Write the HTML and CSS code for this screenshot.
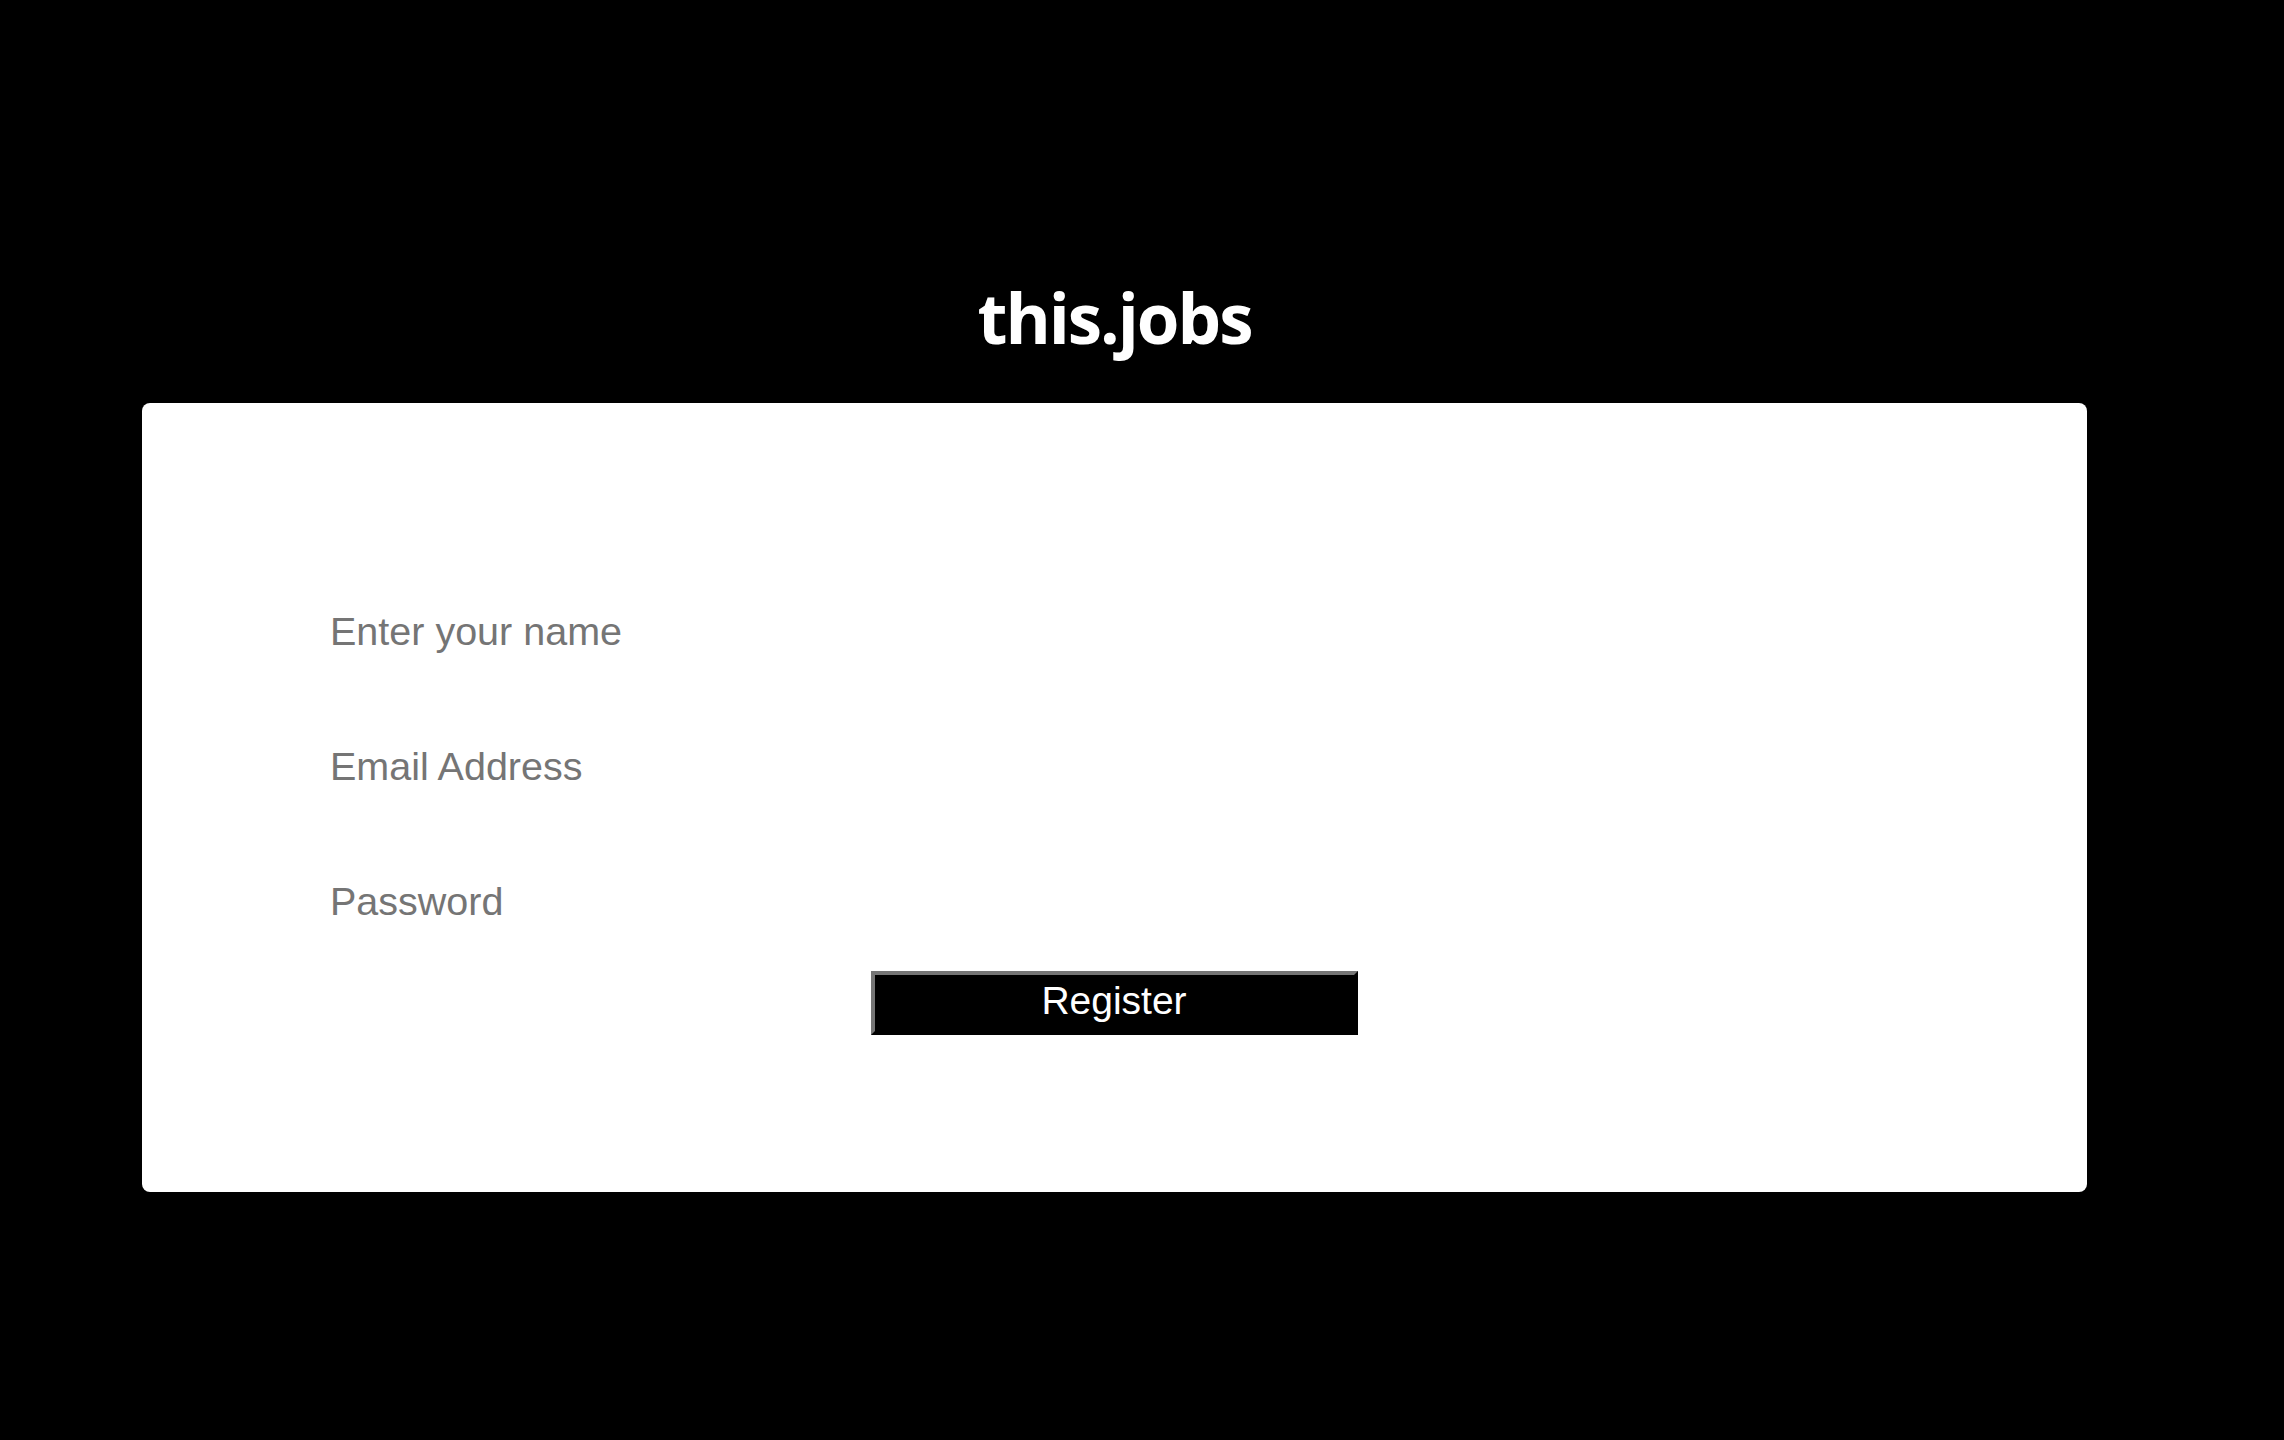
FILE: index.html
```html
<!DOCTYPE html>
<html lang="en">
<head>
<meta charset="utf-8">
<title>this.jobs</title>
<link rel="stylesheet" href="styles.css">
</head>
<body>
<div class="page">
  <h1 class="brand">this.jobs</h1>
  <form class="card">
    <div class="fields">
      <input class="field" type="text" placeholder="Enter your name">
      <input class="field" type="email" placeholder="Email Address">
      <input class="field" type="password" placeholder="Password">
    </div>
    <button class="register" type="button">Register</button>
  </form>
</div>
</body>
</html>
```

FILE: styles.css
```css
html, body {
  margin: 0;
  padding: 0;
  background: #000;
  height: 100%;
}
.page {
  width: 1945px;
  margin-left: 142px;
  padding-top: 277px;
  display: flex;
  flex-direction: column;
  align-items: center;
}
.brand {
  margin: 0 0 46px 0;
  font-family: "Open Sans", sans-serif;
  font-weight: 700;
  font-size: 69px;
  letter-spacing: -2px;
  line-height: 80px;
  color: #fff;
}
.card {
  width: 100%;
  box-sizing: border-box;
  background: #fff;
  border-radius: 8px;
  padding: 198px 189px 157px 188px;
  display: flex;
  flex-direction: column;
  align-items: center;
}
.fields {
  align-self: stretch;
  display: flex;
  flex-direction: column;
  gap: 75px;
}
.field {
  height: 60px;
  border: none;
  outline: none;
  padding: 0;
  margin: 0;
  background: transparent;
  font-family: "Liberation Sans", Arial, sans-serif;
  font-size: 39.5px;
  color: #333;
  width: 900px;
}
.field::placeholder {
  color: #757575;
}
.register {
  margin-top: 40px;
  width: 487px;
  height: 64px;
  box-sizing: border-box;
  background: #000;
  color: #fff;
  border: 4px outset #767676;
  border-top-color: #767676;
  border-left-color: #767676;
  border-right-color: #222;
  border-bottom-color: #222;
  padding: 0 0 6px 0;
  font-family: "Liberation Sans", Arial, sans-serif;
  font-size: 39px;
  line-height: 1;
}
```
